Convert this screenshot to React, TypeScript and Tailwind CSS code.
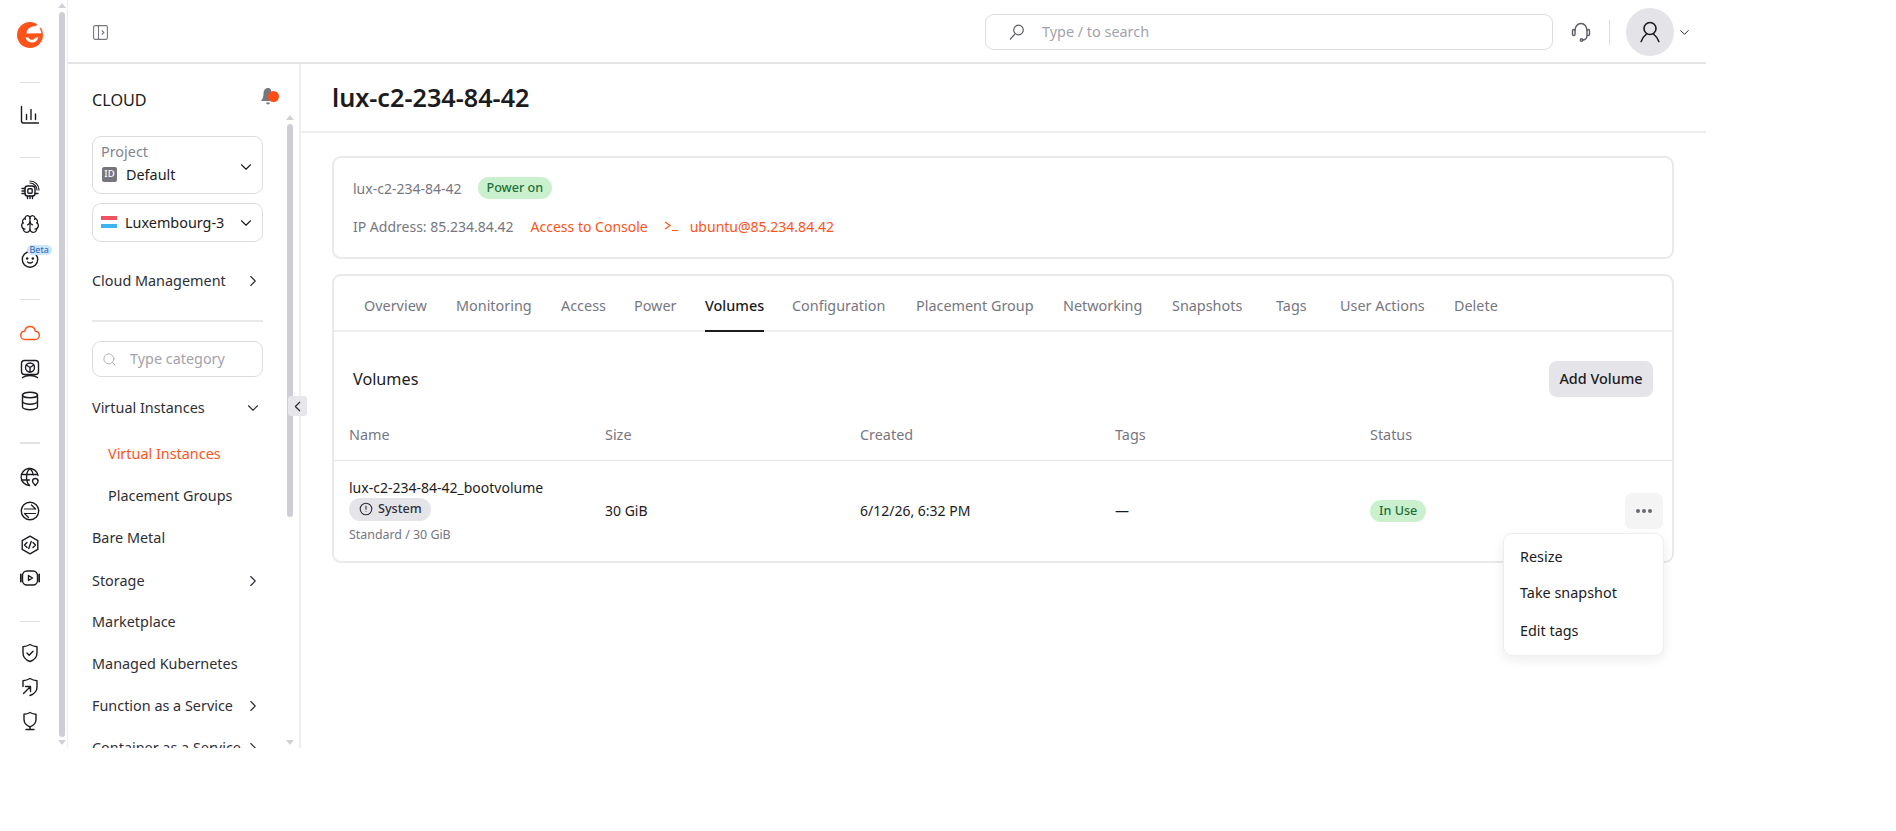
import { ReactNode } from 'react';
import { Brain, ChevronDown, ChevronLeft, ChevronRight, Search } from 'lucide-react';

const TABS = [
  { label: 'Overview', width: 'w-[64px]' },
  { label: 'Monitoring', width: 'w-[77px]' },
  { label: 'Access', width: 'w-[45px]' },
  { label: 'Power', width: 'w-[43px]' },
  { label: 'Volumes', width: 'w-[59px]', active: true },
  { label: 'Configuration', width: 'w-[96px]' },
  { label: 'Placement Group', width: 'w-[119px]' },
  { label: 'Networking', width: 'w-[81px]' },
  { label: 'Snapshots', width: 'w-[76px]' },
  { label: 'Tags', width: 'w-[36px]' },
  { label: 'User Actions', width: 'w-[86px]' },
  { label: 'Delete', width: 'w-[44px]' },
];

function Glyph({ children, size = 20 }: { children: ReactNode; size?: number }) {
  return (
    <svg
      width={size}
      height={size}
      viewBox="0 0 20 20"
      fill="none"
      stroke="#1c1b20"
      strokeWidth="1.4"
      strokeLinecap="round"
      strokeLinejoin="round"
    >
      {children}
    </svg>
  );
}

function Logo() {
  return (
    <svg width="26" height="28" viewBox="0 0 26 28">
      <circle cx="13" cy="14" r="13" fill="#ff5319" />
      <path d="M21 5.500C15.500 4.500 9.500 7 9.500 12.500L24.500 12.200C24.200 10 23 7.500 21 5.500z" fill="#fff" />
      <path
        d="M8.500 16.500C9 19 11 21 14 21.500 17.500 22 20.500 20 21.500 16.300L18.500 16.500C17.500 18.500 15.500 19.200 13.800 18.700 12.500 18.300 11.800 17.500 11.500 16.500z"
        fill="#fff"
      />
      <path d="M18.500 5.500 21.500 1.500 25 4.500 23 7.500z" fill="#fff" />
      <path d="M1 20c1.500 4 6 6.700 9 7L0 28z" fill="#fff" />
    </svg>
  );
}

function Scrollbar({ thumb, className }: { thumb: string; className: string }) {
  return (
    <div className={`flex w-[6px] flex-col items-center ${className}`}>
      <div className="h-0 w-0 border-x-[4px] border-b-[5px] border-x-transparent border-b-[#d1d0d6]" />
      <div className={`mt-[4px] w-[6px] rounded-[3px] bg-[#cfced4] ${thumb}`} />
      <div className="mt-auto mb-[3px] h-0 w-0 border-x-[4px] border-t-[5px] border-x-transparent border-t-[#d1d0d6]" />
    </div>
  );
}

function RailIcons() {
  return (
    <div className="flex w-[59px] flex-col items-center">
      <div className="mt-[21px] ml-[1px] h-[28px]">
        <Logo />
      </div>
      <div className="mt-[33px] h-px w-[20px] bg-[#dededf]" />
      <div className="mt-[22px] h-[20px]">
        <Glyph>
          <path d="M1.500 1.500v14.500c0 1.400.8 2 2 2H18.500" />
          <path d="M6.500 9.500v5M11 4.500v10M15.500 9v5.500" />
        </Glyph>
      </div>
      <div className="mt-[32px] h-px w-[20px] bg-[#dededf]" />
      <div className="mt-[22px] h-[20px]">
        <Glyph>
          <rect x="5" y="6" width="10" height="10" rx="2.500" />
          <rect x="7.800" y="8.800" width="4.400" height="4.400" rx="1" />
          <path d="M2 8.500h3M2 11h3M2 13.500h3M15 13.500h3M7.500 16v2.500M10 16v2.500M12.500 16v2.500" />
          <path d="M10 3c3.800 0 7 3.200 7 7M10 1c5 0 9 4 9 9" strokeWidth="1.200" />
        </Glyph>
      </div>
      <div className="mt-[14px] h-[20px]">
        <Brain size={20} strokeWidth={1.500} className="text-[#1c1b20]" />
      </div>
      <div className="relative mt-[14px] h-[22px]">
        <Glyph>
          <circle cx="10" cy="11.500" r="7.700" />
          <path d="M10 3.800C8 3.500 7.200 2 8.500 1" />
          <circle cx="7.200" cy="10.500" r=".6" fill="#1c1b20" />
          <circle cx="12.800" cy="10.500" r=".6" fill="#1c1b20" />
          <path d="M7.500 14c1.500 1.300 3.500 1.300 5 0" />
        </Glyph>
        <span className="absolute top-[-3px] left-[7px] rounded-full bg-[#cfe4fb] px-[3px] text-[9px] leading-[10px] text-[#1c62b5]">
          Beta
        </span>
      </div>
      <div className="mt-[29px] h-px w-[20px] bg-[#dededf]" />
      <div className="mt-[23px] h-[20px]">
        <svg width="20" height="20" viewBox="0 0 20 20" fill="none" stroke="#ff5319" strokeWidth="1.400" strokeLinejoin="round">
          <path d="M5 16.500C2.500 16.500.7 14.700.7 12.400c0-2.300 1.700-4 3.900-4.100C5.200 5.400 7.400 3.500 10 3.500s4.800 1.900 5.400 4.800c2.200.1 3.900 1.800 3.900 4.100 0 2.300-1.800 4.100-4.300 4.100z" />
        </svg>
      </div>
      <div className="mt-[16px] h-[20px]">
        <Glyph>
          <rect x="1.500" y="1.500" width="17" height="14" rx="3" />
          <circle cx="10" cy="8.500" r="4.500" />
          <path d="M10 8.500V13M10 8.500 6.300 6M10 8.500 13.700 6" />
          <path d="M2.500 18.500c2-1.500 4-2 7.500-2s5.500.5 7.500 2" />
        </Glyph>
      </div>
      <div className="mt-[12px] h-[20px]">
        <Glyph>
          <ellipse cx="10" cy="4" rx="7.500" ry="2.800" />
          <path d="M2.500 4v12c0 1.500 3.400 2.800 7.500 2.800s7.500-1.300 7.500-2.800V4" />
          <path d="M2.500 10.500c0 1.500 3.400 2.800 7.500 2.800s7.500-1.300 7.500-2.800" />
        </Glyph>
      </div>
      <div className="mt-[31px] h-[2px] w-[20px] bg-[#e2e2e4]" />
      <div className="mt-[23px] h-[20px]">
        <Glyph>
          <path d="M18 8.500A8.500 8.500 0 1 0 9.500 18.500" />
          <path d="M1.500 7.500h16M1.500 13h8M10 1.500c-2.500 2-3.500 5-3.500 8.500s1 6.500 3 8.500M10 1.500c2 2 3 4 3.300 6.500" />
          <path d="M15.300 18.500c-1.500-1.500-2.800-2.800-2.800-4.200a2.800 2.800 0 0 1 5.600 0c0 1.400-1.300 2.700-2.800 4.200z" />
        </Glyph>
      </div>
      <div className="mt-[14px] h-[20px]">
        <Glyph>
          <circle cx="10" cy="10" r="8.700" />
          <path d="M4.500 8h10.500M11.500 4 15.500 8M15.500 12.500H5M8.500 16.500 4.500 12.500" strokeWidth="1.200" />
        </Glyph>
      </div>
      <div className="mt-[14px] h-[20px]">
        <Glyph>
          <path d="M10 1.200 17.800 5.600v8.800L10 18.800 2.200 14.400V5.600z" />
          <path d="m7 7.500-2.500 2.500L7 12.500M13 7.500l2.500 2.500-2.500 2.500M11.200 6.500 8.800 13.500" />
        </Glyph>
      </div>
      <div className="mt-[13px] h-[20px]">
        <Glyph>
          <rect x="2.500" y="3" width="15" height="14" rx="4.500" />
          <path d="M.8 6.500v7M19.200 6.500v7" strokeWidth="1.800" />
          <path d="M8.500 7.500v5l4-2.500z" />
        </Glyph>
      </div>
      <div className="mt-[33px] h-px w-[20px] bg-[#dededf]" />
      <div className="mt-[21px] h-[20px]">
        <Glyph>
          <path d="M10 1.500c2.500 1.500 4.500 2 7 2.200v6.300c0 4-3 7-7 8.500-4-1.500-7-4.500-7-8.500V3.700c2.500-.2 4.500-.7 7-2.200z" />
          <path d="m7 10 2.200 2.200L13 8.200" />
        </Glyph>
      </div>
      <div className="mt-[14px] h-[20px]">
        <Glyph>
          <path d="M3 9.500V3.700c2.500-.2 4.500-.7 7-2.200 2.500 1.500 4.500 2 7 2.200v6.300c0 4-3 7-7 8.500" />
          <path d="M3.500 16.500 10.500 9.500M5.500 9.500h5V14.500" />
        </Glyph>
      </div>
      <div className="mt-[14px] h-[20px]">
        <Glyph>
          <path d="M10 1.500c2.200 1.200 3.800 1.600 6 1.800v5.200c0 3.400-2.500 6-6 7.300-3.500-1.300-6-3.900-6-7.300V3.300c2.200-.2 3.800-.6 6-1.800z" />
          <path d="M10 15.800V18.500M6 18.500h8" />
        </Glyph>
      </div>
    </div>
  );
}

function NavRow({
  label,
  chevron,
  className = '',
}: {
  label: string;
  chevron?: 'right' | 'down';
  className?: string;
}) {
  return (
    <div className={`flex h-[42px] shrink-0 items-center justify-between ${className}`}>
      <span className="text-[14.400px] whitespace-nowrap text-[#2f2e35]">{label}</span>
      {chevron === 'right' && <ChevronRight size={18} strokeWidth={1.500} className="mr-[1px] text-[#2f2e35]" />}
      {chevron === 'down' && <ChevronDown size={18} strokeWidth={1.500} className="mr-[1px] text-[#2f2e35]" />}
    </div>
  );
}

function Sidebar() {
  return (
    <aside className="relative flex h-full w-[233px] shrink-0 border-r-2 border-[#eeeef0]">
      <div className="flex w-[219px] shrink-0 flex-col overflow-hidden pr-[24px] pl-[24px]">
        <div className="flex h-[72px] shrink-0 items-center justify-between overflow-visible">
          <span className="text-[16.200px] text-[#1c1b20]">CLOUD</span>
          <div className="relative mt-[-6px] mr-[-16px] h-[20px] w-[19px]">
            <svg width="18" height="20" viewBox="0 0 18 20" fill="#77767f">
              <path d="M8 1c-3 0-4.500 2.500-4.500 6 0 3-1 5-2.500 7h13c-1.500-2-2.500-4-2.500-7C11.500 3.500 11 1 8 1zM6 15.500c.3 2.500 3.700 2.500 4 0z" />
            </svg>
            <span className="absolute top-[4px] right-0 h-[11px] w-[11px] rounded-full bg-[#ff4d12]" />
          </div>
        </div>
        <div className="flex h-[58px] shrink-0 items-center justify-between rounded-[9px] border border-[#dcdce0] pr-[7px] pl-[8px]">
          <div className="flex flex-col pb-[3px]">
            <span className="text-[14.400px] leading-[22px] text-[#85848e]">Project</span>
            <div className="flex items-center gap-[9px] pl-[1px]">
              <span className="flex h-[15px] w-[15px] items-center justify-center rounded-[2px] bg-[#77767f] text-[9.500px] font-medium text-white">
                ID
              </span>
              <span className="text-[14.400px] leading-[23px] text-[#1c1b20]">Default</span>
            </div>
          </div>
          <ChevronDown size={18} strokeWidth={1.500} className="mt-[3px] text-[#1c1b20]" />
        </div>
        <div className="mt-[9px] flex h-[39px] shrink-0 items-center justify-between rounded-[9px] border border-[#dcdce0] pr-[7px] pl-[8px]">
          <div className="flex items-center gap-[8px]">
            <div className="flex h-[12px] w-[16px] flex-col">
              <div className="h-[4px] bg-[#f0525f]" />
              <div className="h-[4px] bg-white" />
              <div className="h-[4px] bg-[#3db4ee]" />
            </div>
            <span className="text-[14.400px] text-[#1c1b20]">Luxembourg-3</span>
          </div>
          <ChevronDown size={18} strokeWidth={1.500} className="text-[#1c1b20]" />
        </div>
        <NavRow label="Cloud Management" chevron="right" className="mt-[18px]" />
        <div className="mt-[18px] h-[2px] shrink-0 bg-[#e8e8ea]" />
        <div className="mt-[19px] flex h-[36px] shrink-0 items-center rounded-[9px] border border-[#dcdce0] pl-[9px]">
          <Search size={15} strokeWidth={1.300} className="text-[#a3a2ab]" />
          <span className="ml-[13px] text-[14.400px] text-[#a3a2ab]">Type category</span>
        </div>
        <NavRow label="Virtual Instances" chevron="down" className="mt-[10px]" />
        <div className="mt-[4px] flex h-[42px] shrink-0 items-center pl-[16px]">
          <span className="text-[14.400px] text-[#ff5319]">Virtual Instances</span>
        </div>
        <NavRow label="Placement Groups" className="pl-[16px]" />
        <NavRow label="Bare Metal" />
        <NavRow label="Storage" chevron="right" className="pt-[1px]" />
        <NavRow label="Marketplace" />
        <NavRow label="Managed Kubernetes" />
        <NavRow label="Function as a Service" chevron="right" />
        <NavRow label="Container as a Service" chevron="right" />
      </div>
      <Scrollbar className="mt-[51px]" thumb="h-[393px]" />
      <div className="absolute top-[332px] left-[220px] flex h-[20px] w-[19px] items-center justify-center rounded-[3px] bg-[#e7e6ea]">
        <ChevronLeft size={17} strokeWidth={1.700} className="text-[#2f2e35]" />
      </div>
    </aside>
  );
}

function Header() {
  return (
    <header className="flex h-[64px] shrink-0 items-center border-b-2 border-[#e4e4e6] pt-[2px] pr-[14px]">
      <div className="ml-[25px]">
        <svg width="15" height="15" viewBox="0 0 15 15" fill="none" stroke="#77767f" strokeWidth="1.100">
          <rect x=".6" y=".6" width="13.800" height="13.800" rx="1.500" />
          <path d="M5.500.6v13.800M8.800 5.500l2 2-2 2" />
        </svg>
      </div>
      <div className="ml-auto flex h-[36px] w-[568px] items-center rounded-[9px] border border-[#dcdce0] pl-[23px]">
        <svg width="15" height="17" viewBox="0 0 15 17" fill="none" stroke="#5d5c65" strokeWidth="1.200">
          <circle cx="9.500" cy="6" r="4.800" />
          <path d="M6 9.800 1 15.500" />
        </svg>
        <span className="ml-[18px] text-[14.400px] text-[#a3a2ab]">Type / to search</span>
      </div>
      <div className="ml-[18px]">
        <svg width="20" height="20" viewBox="0 0 20 20" fill="none" stroke="#5d5c65" strokeWidth="1.400" strokeLinecap="round">
          <path d="M4 8.500C4 4.500 6.500 1.500 10 1.500s6 3 6 7" />
          <rect x="1.500" y="7.500" width="2.500" height="6" rx="1.200" />
          <rect x="16" y="7.500" width="2.500" height="6" rx="1.200" />
          <path d="M16 13.500c0 2.500-1.800 4.500-4.500 4.500" />
          <circle cx="10.500" cy="18" r="1.200" />
        </svg>
      </div>
      <div className="ml-[18px] h-[25px] w-px bg-[#dcdce0]" />
      <div className="ml-[16px] flex h-[48px] w-[48px] items-center justify-center rounded-full bg-[#e4e3e8]">
        <svg width="24" height="24" viewBox="0 0 24 24" fill="none" stroke="#1c1b20" strokeWidth="1.600" strokeLinecap="round">
          <circle cx="12" cy="8.500" r="6" />
          <path d="M8.500 14C6 16 4.200 18.500 3.200 21.500M15.500 14c2.500 2 4.300 4.500 5.300 7.500" />
        </svg>
      </div>
      <ChevronDown size={15} strokeWidth={1.500} className="ml-[3px] text-[#1c1b20]" />
    </header>
  );
}

function InfoCard() {
  return (
    <div className="mt-[23px] flex h-[103px] shrink-0 flex-col rounded-[9px] border-2 border-[#e9e9eb] pl-[19px]">
      <div className="mt-[19px] flex h-[22px] items-center">
        <span className="text-[14px] text-[#77767f]">lux-c2-234-84-42</span>
        <span className="ml-[16px] rounded-full bg-[#caf0cd] px-[9px] text-[12.600px] leading-[22px] font-medium text-[#1d6f3a]">
          Power on
        </span>
      </div>
      <div className="mt-[16px] flex h-[22px] items-center">
        <span className="text-[14px] text-[#77767f]">IP Address: 85.234.84.42</span>
        <span className="ml-[17px] text-[14px] text-[#ff5319]">Access to Console</span>
        <svg className="ml-[16px]" width="15" height="12" viewBox="0 0 15 12" fill="none" stroke="#ff5319" strokeWidth="1.200">
          <path d="m1 2 5 3.500L1 9M8 10.500h6" />
        </svg>
        <span className="ml-[11px] text-[14px] text-[#ff5319]">ubuntu@85.234.84.42</span>
      </div>
    </div>
  );
}

function Tabs() {
  return (
    <div className="flex h-[56px] shrink-0 items-center gap-[28px] border-b-2 border-[#eeeef0] pt-[5px] pl-[30px]">
      {TABS.map((tab) => (
        <div key={tab.label} className={`relative flex h-full shrink-0 items-center ${tab.width}`}>
          <span className={`text-[14.400px] whitespace-nowrap ${tab.active ? 'font-medium text-[#1c1b20]' : 'text-[#77767f]'}`}>
            {tab.label}
          </span>
          {tab.active && <div className="absolute right-0 bottom-[-2px] left-0 h-[2px] bg-[#1c1b20]" />}
        </div>
      ))}
    </div>
  );
}

function VolumesTable() {
  return (
    <>
      <div className="mt-[29px] flex h-[36px] items-center justify-between pr-[19px] pl-[19px]">
        <span className="text-[16.200px] text-[#1c1b20]">Volumes</span>
        <button className="h-[36px] w-[104px] rounded-[8px] bg-[#e5e4e9] text-[14.400px] font-medium text-[#1c1b20]">
          Add Volume
        </button>
      </div>
      <div className="mt-[14px] grid h-[50px] grid-cols-[255px_255px_255px_255px_1fr] items-center border-b border-[#e4e4e6] pb-[1px] pl-[15px] text-[14.400px] text-[#77767f]">
        <span>Name</span>
        <span className="pl-[1px]">Size</span>
        <span className="pl-[1px]">Created</span>
        <span className="pl-[1px]">Tags</span>
        <span className="pl-[1px]">Status</span>
      </div>
      <div className="relative grid h-[101px] grid-cols-[255px_255px_255px_255px_1fr] items-center pl-[15px] text-[14px] text-[#1c1b20]">
        <div className="flex flex-col items-start">
          <span className="leading-[21px]">lux-c2-234-84-42_bootvolume</span>
          <span className="flex h-[23px] items-center gap-[5px] rounded-full bg-[#e5e4e9] pr-[9px] pl-[10px] text-[12.600px] font-medium text-[#2f2e35]">
            <svg width="14" height="14" viewBox="0 0 14 14" fill="none" stroke="#2f2e35" strokeWidth="1.100">
              <circle cx="7" cy="7" r="5.800" />
              <path d="M7 3.800v4M7 9.500v.6" />
            </svg>
            System
          </span>
          <span className="mt-[3px] text-[12.400px] leading-[21px] text-[#77767f]">Standard / 30 GiB</span>
        </div>
        <span className="pl-[1px]">30 GiB</span>
        <span className="pl-[1px]">6/12/26, 6:32 PM</span>
        <span className="pl-[1px]">—</span>
        <div className="flex items-center justify-between pr-[9px] pl-[1px]">
          <span className="mt-[1px] rounded-full bg-[#caf0cd] px-[9px] text-[12.600px] leading-[22px] font-medium text-[#1d6f3a]">In Use</span>
          <div className="flex h-[36px] w-[38px] items-center justify-center gap-[2px] rounded-[7px] bg-[#f4f4f5]">
            <span className="h-[4px] w-[4px] rounded-full bg-[#6b6a73]" />
            <span className="h-[4px] w-[4px] rounded-full bg-[#6b6a73]" />
            <span className="h-[4px] w-[4px] rounded-full bg-[#6b6a73]" />
          </div>
        </div>
        <div className="absolute top-[72px] right-[8px] z-10 flex h-[123px] w-[161px] flex-col rounded-[9px] border border-[#eeeef0] bg-white py-[5px] pl-[16px] text-[14.400px] shadow-[0_4px_12px_rgba(28,27,32,0.08)]">
          <span className="flex h-[36px] items-center">Resize</span>
          <span className="flex h-[39px] items-center">Take snapshot</span>
          <span className="flex h-[38px] items-center">Edit tags</span>
        </div>
      </div>
    </>
  );
}

export default function App() {
  return (
    <div className="flex h-[748px] w-[1706px] overflow-hidden bg-white font-['Noto_Sans',sans-serif]">
      <div className="flex h-full w-[68px] shrink-0 border-r border-[#eeeef0]">
        <RailIcons />
        <Scrollbar className="pt-[3px]" thumb="h-[725px]" />
      </div>
      <div className="flex min-w-0 flex-1 flex-col">
        <Header />
        <div className="flex min-h-0 flex-1">
          <Sidebar />
          <main className="flex min-w-0 flex-1 flex-col">
            <div className="flex h-[69px] shrink-0 items-center border-b-2 border-[#eeeef0] pl-[31px]">
              <h1 className="text-[25.200px] leading-none font-semibold text-[#1c1b20]">lux-c2-234-84-42</h1>
            </div>
            <div className="flex flex-col pr-[32px] pl-[31px]">
              <InfoCard />
              <div className="mt-[15px] flex h-[289px] flex-col rounded-[9px] border-2 border-[#e9e9eb]">
                <Tabs />
                <VolumesTable />
              </div>
            </div>
          </main>
        </div>
      </div>
    </div>
  );
}
